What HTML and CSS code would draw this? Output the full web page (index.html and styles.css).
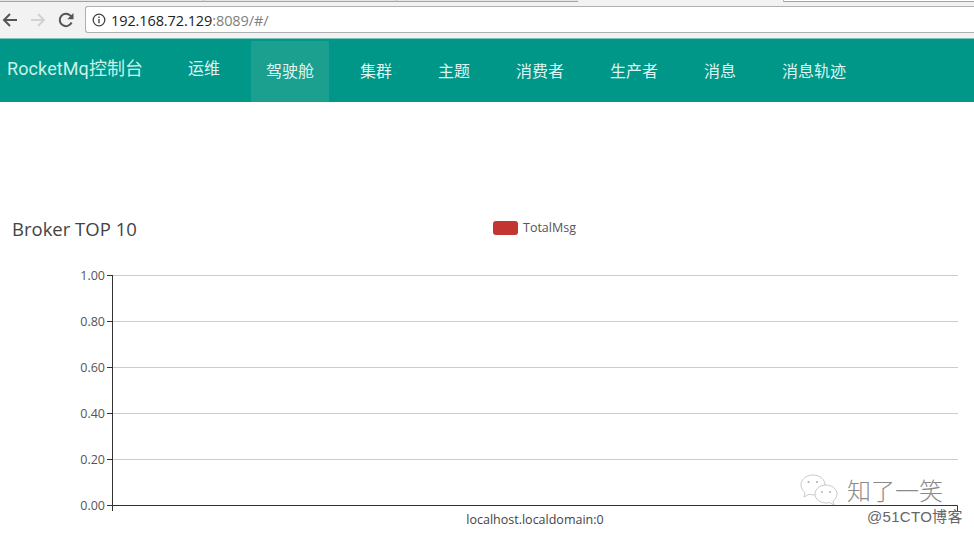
FILE: index.html
```html
<!DOCTYPE html>
<html>
    <head>
        <meta charset="utf-8">
        <title>RocketMq控制台</title>
        <link rel="stylesheet" href="styles.css">
    </head>
    <body>
        <div class="tabs">
            <div class="tab tab_first"></div>
            <div class="tab tab_second"></div>
            <div class="tab tab_third"></div>
            <div class="tab tab_active"></div>
            <div class="tab tab_last"></div>
        </div>
        <div class="toolbar">
            <svg class="tool" width="18" height="18" viewBox="0 0 18 18"><path d="M16 9H3M9 3L3 9l6 6" fill="none" stroke="#555" stroke-width="2"/></svg>
            <svg class="tool" width="18" height="18" viewBox="0 0 18 18"><path d="M2 9h13M9 3l6 6-6 6" fill="none" stroke="#d2d2d2" stroke-width="2"/></svg>
            <svg class="tool" width="18" height="18" viewBox="0 0 18 18"><path d="M14.6 11.5A6.2 6.2 0 1 1 13.4 4.6L15.5 6.5" fill="none" stroke="#555" stroke-width="2"/><path d="M16.5 2v6.2h-6.2z" fill="#555"/></svg>
            <div class="address">
                <svg width="14" height="14" viewBox="0 0 14 14"><circle cx="7" cy="7" r="5.8" fill="none" stroke="#444" stroke-width="1.3"/><path d="M7 6v4.2M7 3.6v1.4" stroke="#444" stroke-width="1.4"/></svg>
                <span class="host">192.168.72.129</span><span class="port">:8089/#/</span>
            </div>
        </div>
        <nav class="navbar">
            <a class="brand">RocketMq控制台</a>
            <ul class="menu">
                <li class="raised">运维</li>
                <li class="active">驾驶舱</li>
                <li>集群</li>
                <li>主题</li>
                <li>消费者</li>
                <li>生产者</li>
                <li>消息</li>
                <li>消息轨迹</li>
            </ul>
        </nav>
        <div class="panel">
            <div class="panel_head">
                <h2>Broker TOP 10</h2>
                <div class="legend"><i></i>TotalMsg</div>
            </div>
            <svg class="chart" width="974" height="264" viewBox="0 0 974 264">
                <g class="grid">
                    <path d="M112 9.5H958M112 55.5H958M112 101.5H958M112 147.5H958M112 193.5H958"/>
                </g>
                <g class="axis">
                    <path d="M112.5 9V245M107 9.5H112M107 55.5H112M107 101.5H112M107 147.5H112M107 193.5H112M107 239.5H957.5V245"/>
                </g>
                <g class="labels">
                    <text x="105" y="14">1.00</text>
                    <text x="105" y="60">0.80</text>
                    <text x="105" y="106">0.60</text>
                    <text x="105" y="152">0.40</text>
                    <text x="105" y="198">0.20</text>
                    <text x="105" y="244">0.00</text>
                </g>
                <text class="xlabel" x="535" y="258">localhost.localdomain:0</text>
            </svg>
        </div>
        <div class="stamp">
            <div class="stamp_row">
                <svg width="40" height="34" viewBox="0 0 40 34"><g fill="#fff" stroke="#bbb" stroke-width="0.8"><path d="M14 2C7 2 2 6.500 2 12c0 3 1.500 5.500 4 7.500L5 24l5-2.700c1.500.4 3 .6 4.500.6C21 22 26 17.500 26 12S21 2 14 2z"/><path d="M27 12c-6 0-11 4-11 9s5 9 11 9c1.300 0 2.500-.2 3.600-.5L35 32l-1-4c2.500-1.700 4-4.200 4-7 0-5-5-9-11-9z"/></g><g fill="#aaa"><circle cx="9.500" cy="9" r="1"/><circle cx="18" cy="9" r="1"/><circle cx="23" cy="19" r="0.900"/><circle cx="31" cy="19" r="0.900"/></g></svg>
                <span class="stamp_name">知了一笑</span>
            </div>
            <div class="stamp_site">@51CTO博客</div>
        </div>
    </body>
</html>
```

FILE: styles.css
```css
*{box-sizing:border-box;}
html,body{margin:0;width:100%;height:100%;overflow:hidden;background-color:#fff;}
body{position:relative;font-family:"Open Sans","Noto Sans CJK SC",sans-serif;}

.tabs{display:flex;height:6px;background-color:#f2f2f2;}
.tab{height:2px;border-bottom:1px solid #a3a3a3;background-color:#e6e6e6;}
.tab_first{width:203px;}
.tab_second{width:193px;border-left:1px solid #bbb;}
.tab_third{width:182px;border-left:1px solid #bbb;}
.tab_active{width:205px;height:0;border:none;}
.tab_last{flex:1;background-color:#fff;border-left:1px solid #bbb;}

.toolbar{display:flex;align-items:center;height:32px;padding:0 0 5px 1px;gap:10px;background-color:#f2f2f2;}
.tool{flex:none;}
.address{flex:1;display:flex;align-items:center;height:27px;padding:1px 0 0 6px;background-color:#fff;border:1px solid #b0b0b0;border-right:none;border-radius:3px 0 0 3px;font-family:"Open Sans",sans-serif;font-size:14.5px;letter-spacing:-.1px;}
.address svg{margin-right:5px;}
.host{color:#222;}
.port{color:#808080;}

.navbar{display:flex;height:64px;padding-left:7px;background-color:#009688;border-top:1px solid #7cc4bb;color:#dff5f1;font-family:Roboto,"Noto Sans CJK SC",sans-serif;font-size:16px;}
.brand{flex:none;width:136px;margin-top:18px;font-size:18px;letter-spacing:.1px;line-height:24px;color:#c9f3ea;white-space:nowrap;}
.menu{display:flex;gap:16px;margin:0 0 0 30px;padding:0;list-style:none;}
.menu li{padding:21px 15px 0;margin-top:2px;line-height:20px;white-space:nowrap;}
.menu .raised{padding-top:18px;}
.menu .active{background-color:#1ba090;}

.panel{padding-top:112px;}
.panel_head{position:relative;display:flex;height:52px;padding-left:12px;}
.panel_head h2{margin:0;font-size:18.5px;font-weight:400;line-height:30px;color:#444;}
.legend{position:absolute;left:493px;top:4px;display:flex;align-items:center;gap:5px;font-size:12.5px;line-height:20px;color:#555;}
.legend i{width:25px;height:14px;border-radius:3px;background-color:#c23531;}

.chart{display:block;}
.grid path{fill:none;stroke:#ccc;stroke-width:1;}
.axis path{fill:none;stroke:#333;stroke-width:1;}
.labels text{font-size:12.5px;fill:#555;text-anchor:end;}
.xlabel{font-size:12.5px;fill:#444;text-anchor:middle;}

.stamp{position:absolute;left:799px;top:472px;width:174px;}
.stamp_row{display:flex;align-items:center;gap:8px;height:36px;}
.stamp_name{font-family:"Noto Sans CJK SC",sans-serif;font-weight:300;font-size:24px;line-height:36px;color:#8a8a8a;}
.stamp_site{margin:1px 0 0 68px;font-family:"Liberation Sans","Noto Sans CJK SC",sans-serif;font-size:15px;letter-spacing:.3px;line-height:16px;color:#666;white-space:nowrap;}
```
